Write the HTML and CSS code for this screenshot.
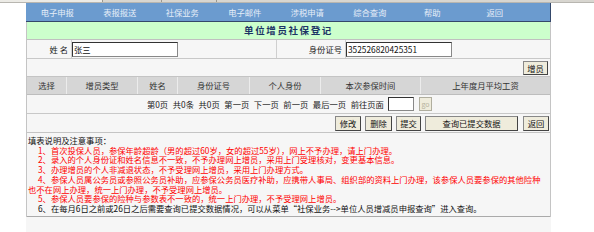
FILE: index.html
```html
<!DOCTYPE html>
<html lang="zh-CN">
<head>
<meta charset="utf-8">
<title>单位增员社保登记</title>
<link rel="stylesheet" href="styles.css">
</head>
<body>
<div class="topstrip"><span class="seg s1"></span><span class="seg s2"></span><span class="seg s3"></span><span class="seg s4"></span></div>
<div class="page">
  <nav class="nav">
    <a class="nav-item">电子申报</a>
    <a class="nav-item">表报报送</a>
    <a class="nav-item">社保业务</a>
    <a class="nav-item">电子邮件</a>
    <a class="nav-item">涉税申请</a>
    <a class="nav-item">综合查询</a>
    <a class="nav-item">帮助</a>
    <a class="nav-item">返回</a>
  </nav>
  <div class="sheet">
    <div class="title">单位增员社保登记</div>
    <div class="formrow">
      <div class="cell label">姓 名</div>
      <div class="cell"><input class="field name-field" value="张三"></div>
      <div class="cell label">身份证号</div>
      <div class="cell"><input class="field id-field" value="352526820425351"></div>
    </div>
    <div class="addrow"><button class="btn w25">增员</button></div>
    <div class="thead">
      <div class="th">选择</div>
      <div class="th">增员类型</div>
      <div class="th">姓名</div>
      <div class="th">身份证号</div>
      <div class="th">个人身份</div>
      <div class="th">本次参保时间</div>
      <div class="th">上年度月平均工资</div>
    </div>
    <div class="pager">
      <span>第0页</span><span>共0条</span><span>共0页</span><span>第一页</span><span>下一页</span><span>前一页</span><span>最后一页</span><span>前往页面</span>
      <input class="field page-field" value="">
      <button class="btn go" disabled>go</button>
    </div>
    <div class="actions">
      <button class="btn w26">修改</button>
      <button class="btn w27">删除</button>
      <button class="btn w25">提交</button>
      <button class="btn w93">查询已提交数据</button>
      <button class="btn w26 last">返回</button>
    </div>
    <div class="notes">
      <div class="notes-head">填表说明及注意事项：</div>
      <div class="item red">1、首次投保人员，参保年龄超龄（男的超过60岁，女的超过55岁），网上不予办理，请上门办理。</div>
      <div class="item red">2、录入的个人身份证和姓名信息不一致，不予办理网上增员，采用上门受理核对，变更基本信息。</div>
      <div class="item red">3、办理增员的个人非减退状态，不予受理网上增员，采用上门办理方式。</div>
      <div class="item red">4、参保人员属公务员或参照公务员补助，应参保公务员医疗补助，应携带人事局、组织部的资料上门办理，该参保人员要参保的其他险种<br>也不在网上办理，统一上门办理，不予受理网上增员。</div>
      <div class="item red">5、参保人员要参保的险种与参数表不一致的，统一上门办理，不予受理网上增员。</div>
      <div class="item">6、在每月6日之前或26日之后需要查询已提交数据情况，可以从菜单“社保业务--&gt;单位人员增减员申报查询”进入查询。</div>
    </div>
  </div>
</div>
</body>
</html>
```
FILE: styles.css
```css
* { box-sizing: border-box; }
html, body { margin: 0; padding: 0; }
body {
  background: #ffffff;
  font-family: "Noto Sans CJK SC", "Noto Sans", sans-serif;
  font-size: 8.3px;
  color: #222222;
  height: 232px;
  overflow: hidden;
}
.topstrip {
  height: 3px;
  background: #d8d6d0;
  display: flex;
  border-bottom: 1px solid #b8b6b0;
}
.topstrip .seg { height: 2px; border-right: 1px solid #9a9890; }
.topstrip .s1 { width: 103px; background: #ecebe6; }
.topstrip .s2 { width: 59px; }
.topstrip .s3 { width: 55px; }
.topstrip .s4 { flex: 1; border-right: none; }

.page {
  margin-left: 26px;
  width: 525px;
  background: #f6f6f6;
  height: 229px;
}
.nav {
  display: flex;
  height: 19px;
  background: #6b9bcf;
  border-bottom: 1px solid #34486a;
  border-right: 1px solid #34486a;
}
.nav-item {
  width: 62.5px;
  text-align: center;
  line-height: 18px;
  color: #e6eef8;
}
.sheet {
  border-left: 1px solid #c4c4c4;
  border-right: 1px solid #c4c4c4;
}
.title {
  height: 18px;
  background: #ccffcc;
  border-bottom: 1px solid #c0c0c0;
  text-align: center;
  font-weight: bold;
  font-size: 9.5px;
  letter-spacing: 1.6px;
  line-height: 17px;
  color: #1c3466;
}
.formrow {
  display: grid;
  grid-template-columns: 45px 205px 69px 1fr;
  height: 19px;
  border-bottom: 1px solid #c8c8c8;
}
.cell {
  display: flex;
  align-items: center;
  border-right: 1px solid #cfcfcf;
}
.cell:last-child { border-right: none; }
.cell.label { justify-content: flex-end; padding-right: 3px; color: #222; }
.field {
  height: 15px;
  border: 1px solid #333;
  border-right-color: #888;
  border-bottom-color: #888;
  background: #fff;
  font: inherit;
  color: #111;
  padding: 0 1px;
  outline: none;
}
.name-field { width: 106px; }
.id-field { width: 106px; margin-left: 0; }
.addrow {
  height: 18px;
  display: flex;
  justify-content: flex-end;
  align-items: center;
  padding-right: 2px;
  border-bottom: 1px solid #c4c4c4;
}
.btn {
  height: 14px;
  padding: 0;
  font: inherit;
  color: #111;
  background: #efecdc;
  border: 1px solid #444;
  border-top-color: #888;
  border-left-color: #888;
  margin-left: 4px;
  line-height: 12px;
}
.w25 { width: 25px; }
.w26 { width: 26px; }
.w27 { width: 27px; }
.w93 { width: 93px; }
.btn.last { margin-left: 5px; }
.thead {
  display: grid;
  grid-template-columns: 40px 71px 40px 72px 71px 100px 1fr;
  height: 18px;
  background: #d6d6d6;
  border-bottom: 1px solid #bdbdbd;
}
.th {
  text-align: center;
  line-height: 17px;
  color: #333;
  border-right: 1px solid #ececec;
}
.th:last-child { border-right: none; }
.pager {
  height: 19px;
  display: flex;
  justify-content: center;
  align-items: center;
  gap: 4.6px;
  border-bottom: 1px solid #c8c8c8;
  padding-left: 2px;
}
.page-field { width: 26px; height: 14px; }
.btn.go {
  width: 13px;
  height: 14px;
  margin-left: 0;
  color: #b8b4a0;
  border-color: #b0ae9e;
  font-size: 7px;
}
.actions {
  height: 19px;
  display: flex;
  justify-content: flex-end;
  align-items: center;
  padding-right: 1px;
  border-bottom: 1px solid #c4c4c4;
}
.actions .btn { height: 15px; }
.notes {
  padding: 3px 1px 3px 1px;
  line-height: 9.7px;
  border-bottom: 1px solid #aaaaaa;
  height: 84px;
}
.notes-head { color: #111; }
.item { text-indent: 10px; color: #111; white-space: nowrap; }
.item.red { color: #ff0000; }
```
